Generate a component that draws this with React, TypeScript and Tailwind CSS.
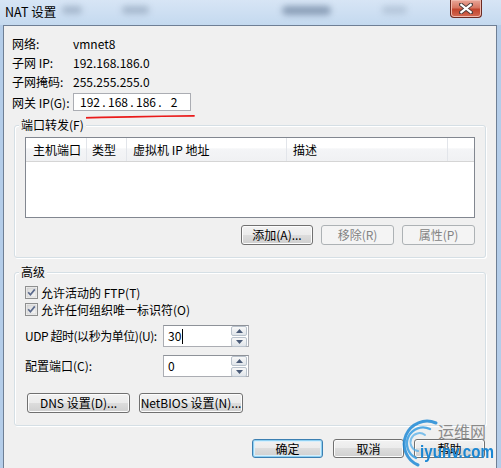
import React from "react";

const F = "font-['Noto_Sans_CJK_SC','Liberation_Sans',sans-serif]";
const BTN =
  "flex items-center justify-center rounded-[3px] border border-[#707070] bg-[linear-gradient(to_bottom,#f2f2f2_0%,#ebebeb_50%,#dddddd_50%,#cfcfcf_100%)] shadow-[inset_0_0_0_1px_#fcfcfc] text-[12px] leading-none text-black";
const BTN_DEFAULT =
  "flex items-center justify-center rounded-[3px] border border-[#3c7fb1] bg-[linear-gradient(to_bottom,#f2f2f2_0%,#ebebeb_50%,#dddddd_50%,#cfcfcf_100%)] shadow-[inset_0_0_0_1px_#8fd0f2,inset_0_0_0_2px_#d8effb] text-[12px] leading-none text-black";
const BTN_DISABLED =
  "flex items-center justify-center rounded-[3px] border border-[#adb2b5] bg-[#f4f4f4] text-[12px] leading-none text-[#838383]";

function Check() {
  return (
    <svg width="13" height="13" viewBox="0 0 13 13">
      <defs>
        <linearGradient id="cbg" x1="0" y1="0" x2="1" y2="1">
          <stop offset="0" stopColor="#d8d8d8" />
          <stop offset="1" stopColor="#f7f7f7" />
        </linearGradient>
      </defs>
      <rect x="0.5" y="0.5" width="12" height="12" fill="#f4f4f4" stroke="#8e8f8f" />
      <rect x="2" y="2" width="9" height="9" fill="url(#cbg)" stroke="#c9c9c9" strokeWidth="0.6" />
      <path d="M3.2 6.3 L5.4 8.8 L9.8 3.4" fill="none" stroke="#5b6a8c" strokeWidth="1.7" />
    </svg>
  );
}

function Spin() {
  return (
    <div className="mr-[1px] flex w-[16px] flex-col gap-[1px] self-center">
      <div className="flex h-[10px] items-center justify-center rounded-[2px] border border-[#b9c2cc] bg-[linear-gradient(to_bottom,#f8f8f8,#e0e5ea)]">
        <svg width="7" height="4" viewBox="0 0 7 4">
          <path d="M0 4 L3.5 0 L7 4 Z" fill="#4a5b78" />
        </svg>
      </div>
      <div className="flex h-[10px] items-center justify-center rounded-[2px] border border-[#b9c2cc] bg-[linear-gradient(to_bottom,#f8f8f8,#e0e5ea)]">
        <svg width="7" height="4" viewBox="0 0 7 4">
          <path d="M0 0 L3.5 4 L7 0 Z" fill="#4a5b78" />
        </svg>
      </div>
    </div>
  );
}

function InfoRow({ label, value }: { label: string; value: string }) {
  return (
    <div className="flex h-[19px] items-center leading-[19px]">
      <span className="w-[61px]">{label}</span>
      <span>{value}</span>
    </div>
  );
}

export default function App() {
  return (
    <div className={`relative h-[468px] w-[501px] overflow-hidden bg-[#b4cde9] text-[12px] text-black ${F}`}>
      {/* title bar */}
      <div className="flex h-[25px] items-start bg-[linear-gradient(to_bottom,#d7e5f5,#c4d9ef)]">
        <span className="pl-[5px] pt-[4px] text-[12.5px] leading-[15px] text-black">NAT 设置</span>
        <div className="ml-[6px] mt-[6px] h-[8px] w-[20px] rounded-full bg-[#7d90a8] opacity-50 blur-[3px]" />
        <div className="ml-[40px] mt-[6px] h-[8px] w-[27px] rounded-full bg-[#7d90a8] opacity-50 blur-[3px]" />
        <div className="ml-[133px] mt-[6px] h-[9px] w-[49px] rounded-full bg-[#5d7390] opacity-60 blur-[3px]" />
        <div className="ml-[51px] mt-[6px] h-[8px] w-[25px] rounded-full bg-[#8d9fb5] opacity-40 blur-[3px]" />
        <div className="ml-auto mr-[19px] flex h-[18px] w-[32px] items-center justify-center rounded-b-[4px] border border-t-0 border-[#6b2a22] bg-[linear-gradient(to_bottom,#e9a698_0%,#d77662_45%,#c2452e_55%,#d36a52_100%)] shadow-[inset_0_0_0_1px_#f0b9ad]">
          <svg width="14" height="11" viewBox="0 0 14 11">
            <path d="M2 1.5 L12 9.5 M12 1.5 L2 9.5" stroke="#4a3a38" strokeWidth="4" strokeLinecap="square" />
            <path d="M2.3 1.8 L11.7 9.2 M11.7 1.8 L2.3 9.2" stroke="#ffffff" strokeWidth="2.2" strokeLinecap="square" />
          </svg>
        </div>
      </div>

      {/* client area */}
      <div className="ml-[3px] mr-[4px] flex h-[443px] flex-col border border-b-0 border-[#6e7f95] bg-[#f0f0f0]">
        <div className="flex flex-col pl-[8px] pt-[8px]">
          <InfoRow label="网络:" value="vmnet8" />
          <InfoRow label="子网 IP:" value="192.168.186.0" />
          <InfoRow label="子网掩码:" value="255.255.255.0" />
          <div className="mt-[2px] flex items-center">
            <span className="relative top-[1px] w-[61px] leading-[18px]">网关 IP(G):</span>
            <div className="relative flex h-[18px] w-[118px] items-center border border-[#abadb3] bg-white pl-[5px] leading-[16px]">
              <span className="w-[22px] text-center">192</span>
              <span className="w-[6px] text-center">.</span>
              <span className="w-[22px] text-center">168</span>
              <span className="w-[6px] text-center">.</span>
              <span className="w-[22px] text-center">186</span>
              <span className="w-[6px] text-center">.</span>
              <span className="w-[22px] text-center">2</span>
              <svg className="absolute left-[-1px] top-[20px]" width="124" height="6" viewBox="0 0 124 6">
                <path d="M1 4.2 Q 55 2.4 121 1.8" fill="none" stroke="#ea1a1a" strokeWidth="1.8" strokeLinecap="round" />
              </svg>
            </div>
          </div>
        </div>

        {/* 端口转发 group */}
        <div className="relative mx-[10px] mt-[14px] rounded-[3px] border border-[#d5dfe5] px-[10px] pb-[12px] pt-[11px] shadow-[inset_1px_1px_0_#ffffff,1px_1px_0_#ffffff]">
          <span className="absolute left-[4px] top-[-10px] bg-[#f0f0f0] px-[2px] leading-[17px]">端口转发(F)</span>
          <div className="h-[81px] border border-[#828790] bg-white">
            <div className="flex h-[24px] border-b border-[#d5d5d5] bg-[linear-gradient(to_bottom,#ffffff_0%,#ffffff_45%,#f4f5f7_46%,#f0f1f3_100%)] leading-[23px]">
              <div className="w-[61px] border-r border-[#e2e5ea] pl-[7px]">主机端口</div>
              <div className="w-[40px] border-r border-[#e2e5ea] pl-[5px]">类型</div>
              <div className="w-[160px] border-r border-[#e2e5ea] pl-[6px]">虚拟机 IP 地址</div>
              <div className="w-[161px] border-r border-[#e2e5ea] pl-[6px]">描述</div>
              <div className="flex-1" />
            </div>
          </div>
          <div className="mt-[7px] flex justify-end gap-[8px]">
            <div className={`${BTN} h-[20px] w-[72px]`}>添加(A)...</div>
            <div className={`${BTN_DISABLED} h-[20px] w-[73px]`}>移除(R)</div>
            <div className={`${BTN_DISABLED} h-[20px] w-[73px]`}>属性(P)</div>
          </div>
        </div>

        {/* 高级 group */}
        <div className="relative mx-[10px] mt-[14px] rounded-[3px] border border-[#d5dfe5] px-[10px] pb-[12px] pt-[11px] shadow-[inset_1px_1px_0_#ffffff,1px_1px_0_#ffffff]">
          <span className="absolute left-[4px] top-[-10px] bg-[#f0f0f0] px-[2px] leading-[17px]">高级</span>
          <div className="flex h-[17px] items-center gap-[3px]">
            <Check />
            <span className="leading-[17px]">允许活动的 FTP(T)</span>
          </div>
          <div className="flex h-[17px] items-center gap-[3px]">
            <Check />
            <span className="leading-[17px]">允许任何组织唯一标识符(O)</span>
          </div>
          <div className="mt-[7px] flex h-[22px] items-center">
            <span className="w-[138px] whitespace-nowrap tracking-[-0.45px]">UDP 超时(以秒为单位)(U):</span>
            <div className="flex h-[22px] w-[86px] border border-[#abadb3] border-t-[#8e9299] bg-white">
              <div className="flex flex-1 items-center pl-[4px]">
                <span className="leading-[16px]">30</span>
                <span className="ml-[1px] h-[15px] w-[1px] bg-black" />
              </div>
              <Spin />
            </div>
          </div>
          <div className="mt-[8px] flex h-[22px] items-center">
            <span className="w-[138px] whitespace-nowrap">配置端口(C):</span>
            <div className="flex h-[22px] w-[86px] border border-[#abadb3] border-t-[#8e9299] bg-white">
              <div className="flex flex-1 items-center pl-[4px]">
                <span className="leading-[16px]">0</span>
              </div>
              <Spin />
            </div>
          </div>
          <div className="mt-[16px] flex gap-[9px] pl-[2px]">
            <div className={`${BTN} h-[20px] w-[103px]`}>DNS 设置(D)...</div>
            <div className={`${BTN} h-[20px] w-[104px]`}>NetBIOS 设置(N)...</div>
          </div>
        </div>

        {/* bottom buttons */}
        <div className="mt-[13px] flex justify-end gap-[10px] pr-[11px]">
          <div className={`${BTN_DEFAULT} h-[19px] w-[71px]`}>确定</div>
          <div className={`${BTN} h-[19px] w-[71px]`}>取消</div>
          <div className={`${BTN} h-[19px] w-[71px]`}>帮助</div>
        </div>
      </div>

      {/* watermark overlay */}
      <svg className="absolute left-[396px] top-[417px]" width="50" height="50" viewBox="0 0 50 50">
        <path d="M40 6 A 22 22 0 1 0 22 48" fill="none" stroke="#1e8ad6" strokeWidth="3" strokeLinecap="round" opacity="0.85" />
        <path d="M34 12 A 15 15 0 1 0 20 41" fill="none" stroke="#2a97e0" strokeWidth="2.4" strokeLinecap="round" opacity="0.8" />
        <path d="M29 18 A 9 9 0 1 0 22 34" fill="none" stroke="#4aa9e8" strokeWidth="2" strokeLinecap="round" opacity="0.7" />
      </svg>
      <span className="absolute left-[438px] top-[422px] text-[16px] leading-[18px] text-[#8a8a8a]">运维网</span>
      <span className="absolute left-[420px] top-[441px] w-[76px] overflow-hidden">
        <span className="block w-[95px] origin-left scale-x-[0.8] font-['Liberation_Sans',sans-serif] text-[19px] font-bold leading-[22px] text-[#1b87d3]">
          iyunv.com
        </span>
      </span>
    </div>
  );
}
